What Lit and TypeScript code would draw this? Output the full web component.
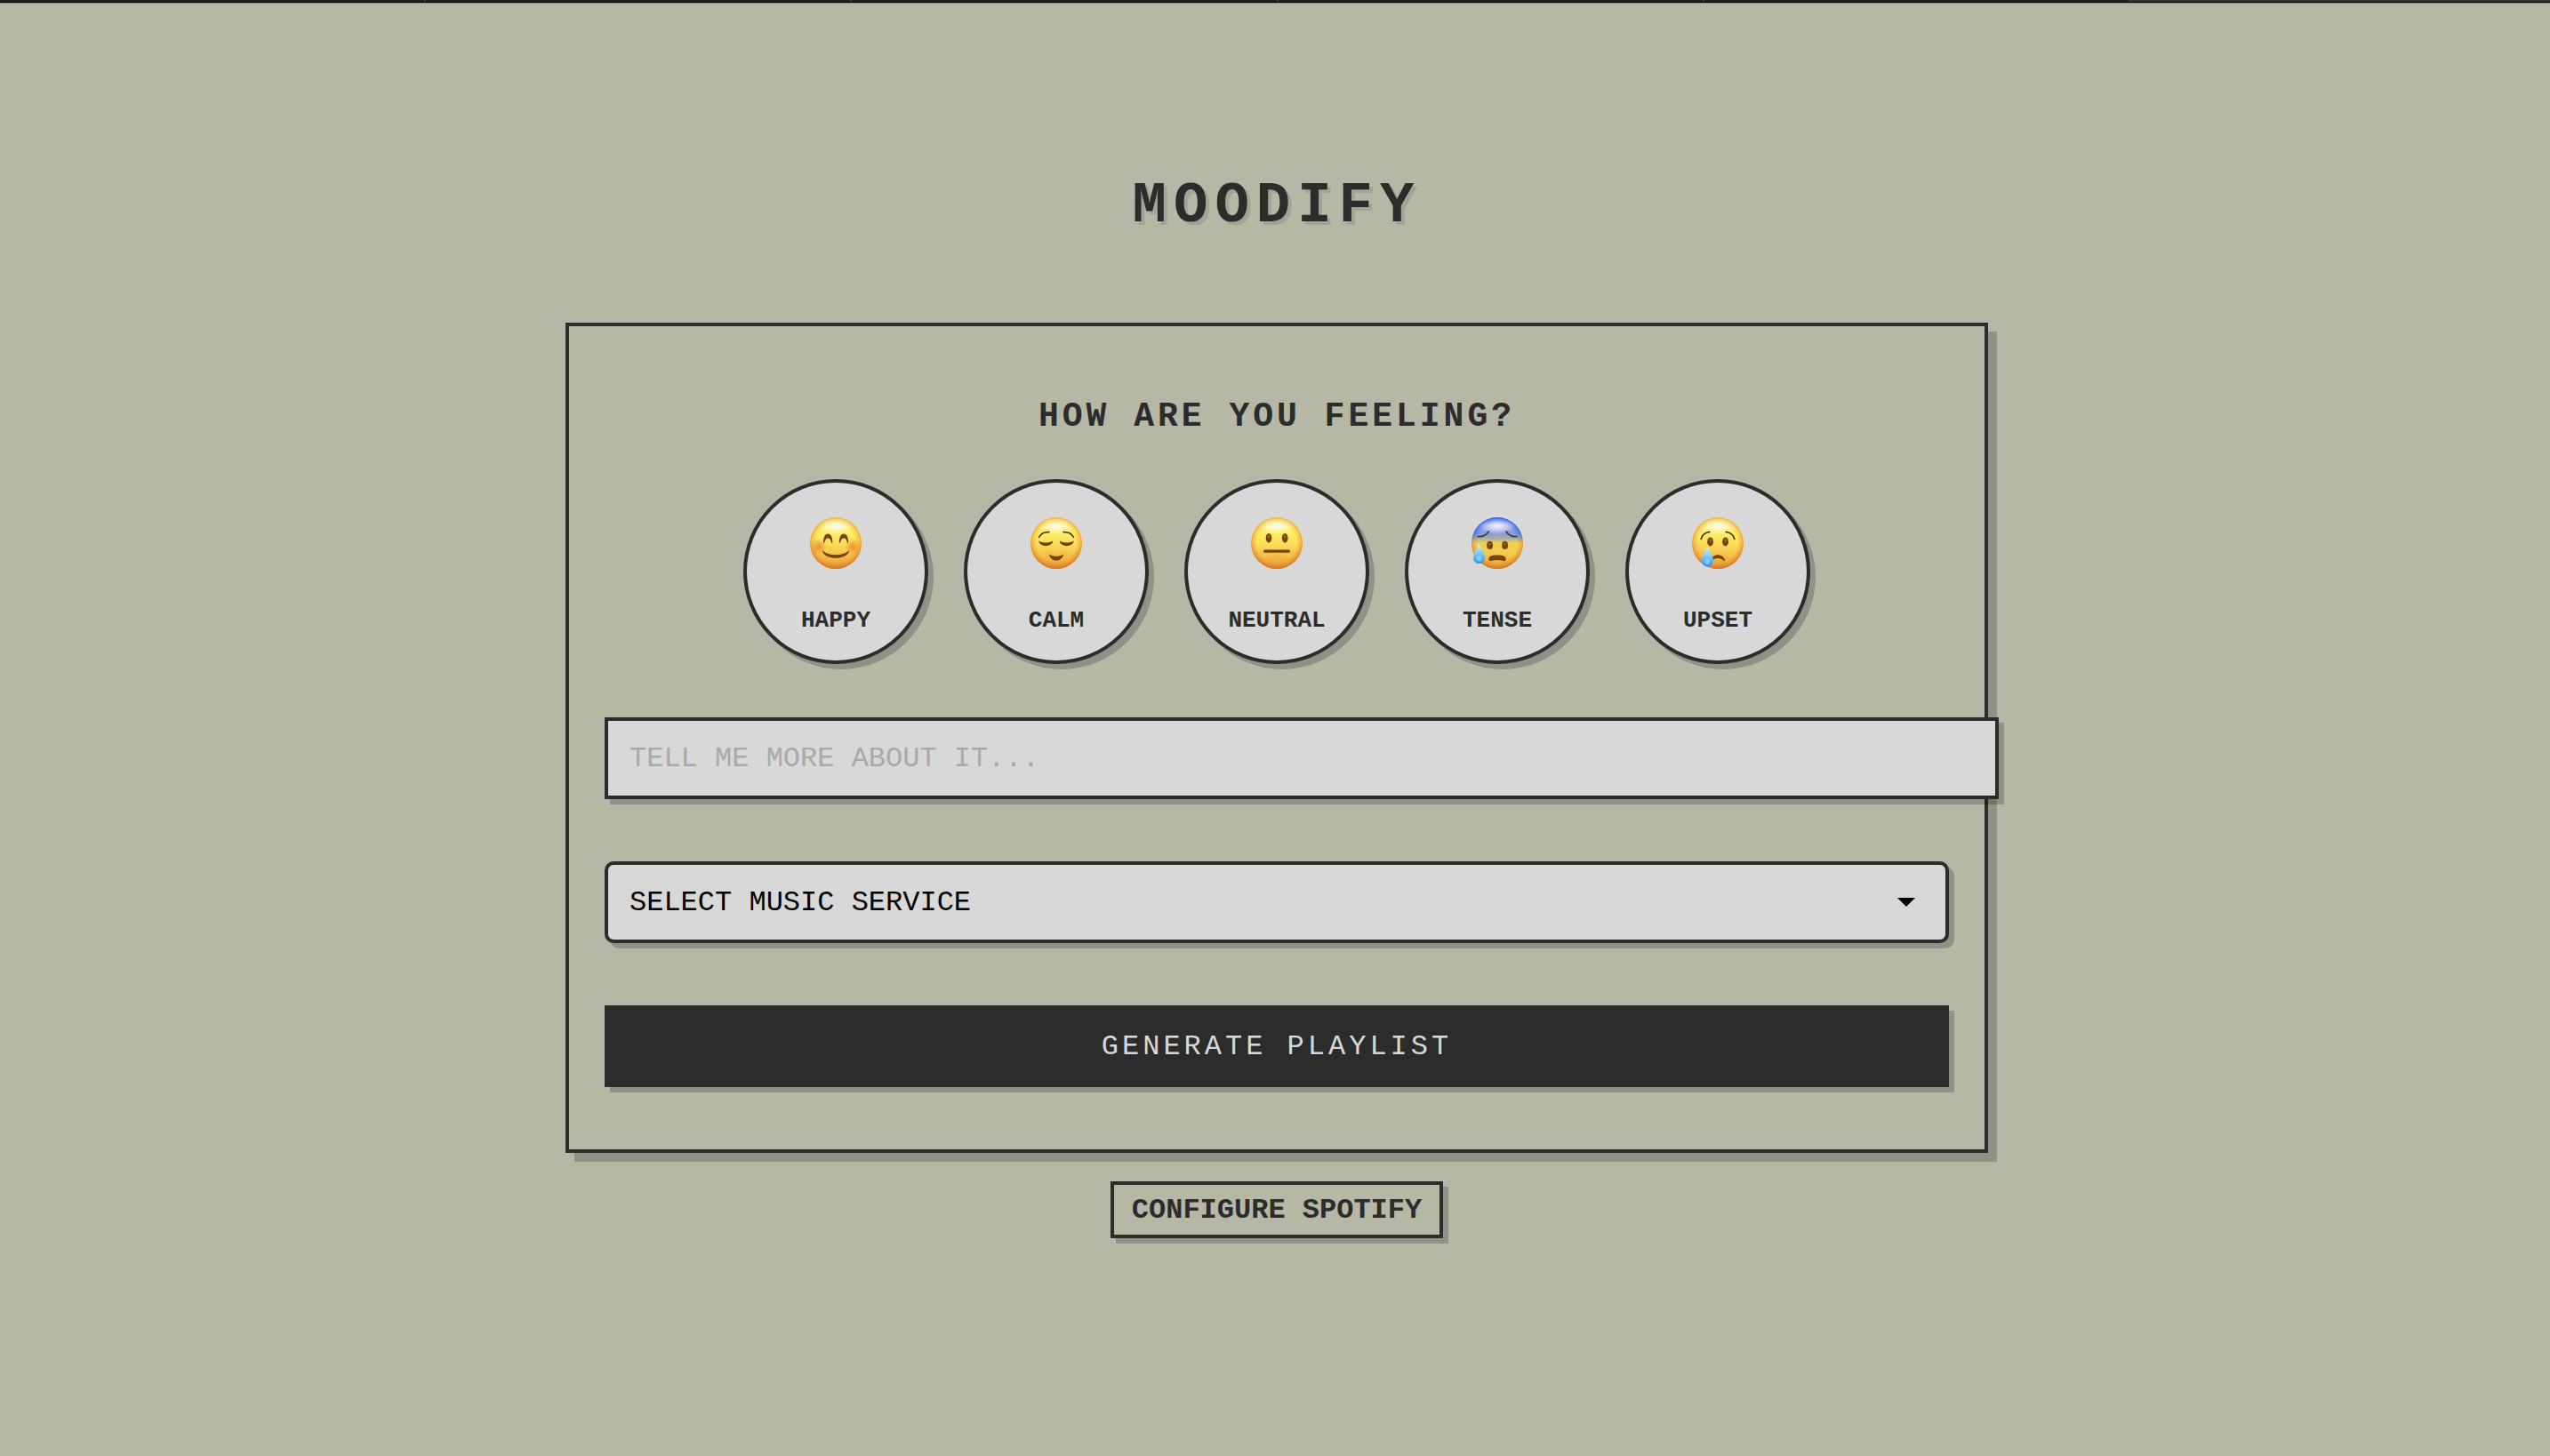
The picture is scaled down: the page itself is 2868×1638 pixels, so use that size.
import { LitElement, html, css, svg } from "lit";
import { customElement, property, state } from "lit/decorators.js";

type Mood = "happy" | "calm" | "neutral" | "tense" | "upset";

const MOODS: Mood[] = ["happy", "calm", "neutral", "tense", "upset"];
const TABS = [0, 1, 2, 3, 4, 5];

const BROWN = "#75430b";
const INK = "#5e3508";

const FEATURES = {
  happy: svg`
    <circle cx="10" cy="33" r="9" fill="url(#blush)" />
    <circle cx="48" cy="33" r="9" fill="url(#blush)" />
    <path d="M15 28.6C15 22 17 18.4 20.2 18.4S25.4 22 25.4 28.6C24.6 29.2 24 28.6 23.8 27.6C23 24.8 22 23.6 20.2 23.6S17.4 24.8 16.6 27.6C16.4 28.6 15.6 29.2 15 28.6Z" fill=${BROWN} />
    <path d="M32.8 28.6C32.8 22 34.8 18.4 38 18.4S43.2 22 43.2 28.6C42.4 29.2 41.8 28.6 41.6 27.6C40.8 24.8 39.8 23.6 38 23.6S35.2 24.8 34.4 27.6C34.2 28.6 33.4 29.2 32.8 28.6Z" fill=${BROWN} />
    <path d="M14.2 37.2C17.6 40.4 22.6 42.2 29 42.2S40.4 40.4 43.8 37.2C44.2 41.6 37.6 45.8 29 45.8S13.8 41.6 14.2 37.2Z" fill=${BROWN} />`,
  calm: svg`
    <path d="M9.6 22.4C11.6 18.6 16 16.2 21 16.6M48.4 22.4C46.4 18.6 42 16.2 37 16.6" fill="none" stroke=${INK} stroke-width="1.7" stroke-linecap="round" />
    <path d="M9.6 26.6C13 29.2 21.6 29.2 25 26.6C25.6 29.4 22 32.2 17.3 32.2S9 29.4 9.6 26.6Z" fill=${BROWN} />
    <path d="M33 26.6C36.4 29.2 45 29.2 48.4 26.6C49 29.4 45.4 32.2 40.7 32.2S32.4 29.4 33 26.6Z" fill=${BROWN} />
    <path d="M21 41.4C24.6 44.6 33.4 44.6 37 41.4C37 44.8 33.4 48.6 29 48.6S21 44.8 21 41.4Z" fill=${BROWN} />`,
  neutral: svg`
    <ellipse cx="20" cy="23.2" rx="3.3" ry="5.2" fill=${BROWN} />
    <ellipse cx="38.2" cy="23.2" rx="3.3" ry="5.2" fill=${BROWN} />
    <ellipse cx="20" cy="21.6" rx="1.3" ry="1.8" fill="#9a6a26" />
    <ellipse cx="38.2" cy="21.6" rx="1.3" ry="1.8" fill="#9a6a26" />
    <rect x="14" y="36.4" width="30" height="3.4" rx="1.5" fill=${BROWN} />`,
  tense: svg`
    <path d="M7.2 21.6C12 22 16.8 19.6 19.2 16M51 21.6C46.2 22 41.4 19.6 39 16" fill="none" stroke="#26435e" stroke-width="1.9" stroke-linecap="round" />
    <ellipse cx="20.6" cy="31.4" rx="3.4" ry="4.6" fill=${BROWN} />
    <ellipse cx="37.6" cy="31.4" rx="3.4" ry="4.6" fill=${BROWN} />
    <ellipse cx="20.6" cy="30" rx="1.3" ry="1.6" fill="#9a6a26" />
    <ellipse cx="37.6" cy="30" rx="1.3" ry="1.6" fill="#9a6a26" />
    <path d="M19.4 47C19.4 44 22.6 42.6 29 42.6S38.6 44 38.6 47C38.6 49.6 37 49.4 35 48.8C31.4 47.8 26.6 47.8 23 48.8C21 49.4 19.4 49.6 19.4 47Z" fill=${BROWN} />
    <path d="M8.6 30C10.6 34.6 15.2 40.4 15.2 45.4C15.2 49.4 12.4 52 8.6 52S2 49.4 2 45.4C2 40.4 6.6 34.6 8.6 30Z" fill="url(#tear)" />
    <ellipse cx="8.6" cy="46.4" rx="2.8" ry="3" fill="#9be4fb" opacity="0.6" />`,
  upset: svg`
    <path d="M10.2 24.4C11.4 20.2 15 17 19.8 16.4M47.8 24.4C46.6 20.2 43 17 38.2 16.4" fill="none" stroke=${INK} stroke-width="1.8" stroke-linecap="round" />
    <ellipse cx="20.6" cy="27.4" rx="3.4" ry="5" fill=${BROWN} />
    <ellipse cx="37.6" cy="27.4" rx="3.4" ry="5" fill=${BROWN} />
    <ellipse cx="20.6" cy="25.8" rx="1.3" ry="1.8" fill="#9a6a26" />
    <ellipse cx="37.6" cy="25.8" rx="1.3" ry="1.8" fill="#9a6a26" />
    <path d="M21.4 48.6C22 44.6 25 42.2 29 42.2S36 44.4 37.2 48.2C37.2 49.6 36.2 49.4 35.4 48.6C33.4 46.8 31.6 46 29 46S24.4 47 22.6 49Z" fill=${BROWN} />
    <path d="M17.4 33C19.4 37.6 24 43.4 24 48.6C24 52.8 21.2 55.4 17.4 55.4S10.8 52.8 10.8 48.6C10.8 43.4 15.4 37.6 17.4 33Z" fill="url(#tear)" />
    <ellipse cx="17.4" cy="49.6" rx="2.8" ry="3.2" fill="#9be4fb" opacity="0.6" />`,
};

@customElement("mood-face")
export class MoodFace extends LitElement {
  @property() mood: Mood = "happy";

  static styles = css`
    :host {
      display: block;
    }
    .face {
      display: block;
      width: 58px;
      height: 58px;
    }
  `;

  render() {
    const tense = this.mood === "tense";
    return html`
      <svg class="face" viewBox="0 0 58 58" aria-hidden="true">
        <defs>
          <linearGradient id="skin" x1="0" y1="0" x2="0" y2="1">
            <stop offset="0" stop-color="#fdf08a" />
            <stop offset="0.3" stop-color="#fdf068" />
            <stop offset="0.55" stop-color="#f9d956" />
            <stop offset="0.8" stop-color="#f4b545" />
            <stop offset="1" stop-color="#e9983a" />
          </linearGradient>
          <linearGradient id="cold" x1="0" y1="0" x2="0" y2="1">
            <stop offset="0" stop-color="#7d8ff0" />
            <stop offset="0.15" stop-color="#a9aeea" />
            <stop offset="0.3" stop-color="#8d9bd6" />
            <stop offset="0.4" stop-color="#a3a9a8" />
            <stop offset="0.5" stop-color="#f0d257" />
            <stop offset="0.7" stop-color="#f8c84c" />
            <stop offset="1" stop-color="#ea9a3a" />
          </linearGradient>
          <linearGradient id="edge" x1="0" y1="0" x2="0" y2="1">
            <stop offset="0" stop-color=${tense ? "#1b5cff" : "#f2ab2e"} />
            <stop offset="0.3" stop-color=${tense ? "#2b6df0" : "#f2a332"} />
            <stop offset="0.5" stop-color="#e89a35" />
            <stop offset="1" stop-color="#cf6f24" />
          </linearGradient>
          <radialGradient id="ring" cx="0.5" cy="0.5" r="0.5">
            <stop offset="0.76" stop-color="#fff" stop-opacity="0" />
            <stop offset="0.92" stop-color="#fff" stop-opacity="0.5" />
            <stop offset="1" stop-color="#fff" stop-opacity="1" />
          </radialGradient>
          <mask id="rim"><rect width="58" height="58" fill="url(#ring)" /></mask>
          <radialGradient id="shine">
            <stop offset="0" stop-color="#fff" stop-opacity="0.85" />
            <stop offset="1" stop-color="#fff" stop-opacity="0" />
          </radialGradient>
          <radialGradient id="blush">
            <stop offset="0" stop-color="#ef7b2c" stop-opacity="0.8" />
            <stop offset="1" stop-color="#ef7b2c" stop-opacity="0" />
          </radialGradient>
          <linearGradient id="tear" x1="0" y1="0" x2="0" y2="1">
            <stop offset="0" stop-color="#d4f4fd" />
            <stop offset="0.45" stop-color="#7fcdf8" />
            <stop offset="1" stop-color="#3190ee" />
          </linearGradient>
        </defs>
        <circle cx="29" cy="29" r="29" fill=${tense ? "url(#cold)" : "url(#skin)"} />
        <circle cx="29" cy="29" r="29" fill="url(#edge)" mask="url(#rim)" />
        <ellipse cx="29" cy="10" rx="20" ry="9" fill="url(#shine)" />
        ${FEATURES[this.mood]}
      </svg>
    `;
  }
}

@customElement("app-root")
export class AppRoot extends LitElement {
  @state() private mood: Mood | null = null;

  static styles = css`
    :host {
      --paper: #b6b7a5;
      --ink: #2c2c2c;
      --plate: #d8d8d8;
      --shade: rgba(0, 0, 0, 0.2);
      display: block;
      min-height: 100vh;
      background: var(--paper);
      color: var(--ink);
      font-family: "Courier New", "Liberation Mono", monospace;
      font-size: 32px;
    }
    .tabs {
      display: grid;
      grid-template-columns: repeat(5, 66fr) 65fr;
      height: 2px;
      background: #1f1f1d;
      border-bottom: 1px solid #000;
      box-shadow: 0 1px 0 #8a8b7c;
    }
    .tab {
      border-right: 2px solid #3c3c3c;
    }
    .tab:last-child {
      background: #333331;
      border-right: 0;
    }
    .page {
      display: flex;
      flex-direction: column;
      align-items: center;
      padding: 193px 20px 40px 24px;
    }
    .title {
      margin: 0 0 95px;
      font-size: 64px;
      line-height: 72px;
      letter-spacing: 8px;
      text-shadow: 4px 4px 0 rgba(0, 0, 0, 0.1);
    }
    .panel {
      box-sizing: border-box;
      width: 100%;
      max-width: 1600px;
      padding: 80px 40px 70px;
      border: 4px solid var(--ink);
      box-shadow: 10px 10px 0 var(--shade);
      display: flex;
      flex-direction: column;
      gap: 70px;
    }
    .question {
      margin: 0 0 48px;
      font-size: 38px;
      line-height: 44px;
      letter-spacing: 4px;
      text-align: center;
    }
    .feelings {
      margin-bottom: -10px;
    }
    .moods {
      display: flex;
      flex-wrap: wrap;
      justify-content: center;
      gap: 40px;
    }
    .mood {
      box-sizing: border-box;
      width: 208px;
      height: 208px;
      padding: 39px 0 0;
      display: flex;
      flex-direction: column;
      align-items: center;
      gap: 43px;
      border: 4px solid var(--ink);
      border-radius: 50%;
      background: var(--plate);
      color: var(--ink);
      box-shadow: 6px 6px 0 var(--shade);
      font: bold 26px/30px "Courier New", "Liberation Mono", monospace;
      cursor: pointer;
    }
    .mood[aria-pressed="true"] {
      background: var(--paper);
    }
    .field {
      height: 84px;
      margin: 0;
      border: 4px solid var(--ink);
      background: var(--plate);
      box-shadow: 6px 6px 0 var(--shade);
      border-radius: 0;
      padding: 0 24px;
      font: inherit;
      color: #000;
    }
    /* Content-box on purpose: the note field runs past the panel's edge. */
    .note {
      box-sizing: content-box;
      width: 100%;
    }
    .note::placeholder {
      color: #a9a9a9;
      opacity: 1;
    }
    .service {
      display: grid;
      align-items: center;
    }
    .select {
      grid-area: 1 / 1;
      box-sizing: border-box;
      width: 100%;
      height: 92px;
      border-radius: 10px;
      appearance: none;
    }
    .arrow {
      grid-area: 1 / 1;
      justify-self: end;
      width: 20px;
      height: 10px;
      margin-right: 38px;
      pointer-events: none;
    }
    .generate {
      height: 92px;
      padding: 0;
      border: 0;
      background: var(--ink);
      color: var(--plate);
      box-shadow: 6px 6px 0 var(--shade);
      font: inherit;
      letter-spacing: 4px;
      cursor: pointer;
    }
    .configure {
      box-sizing: border-box;
      height: 64px;
      margin-top: 32px;
      padding: 0 20px;
      border: 4px solid var(--ink);
      background: transparent;
      color: var(--ink);
      box-shadow: 6px 6px 0 var(--shade);
      font: inherit;
      font-weight: bold;
      cursor: pointer;
    }
  `;

  private pick(mood: Mood) {
    this.mood = this.mood === mood ? null : mood;
  }

  render() {
    return html`
      <div class="tabs">${TABS.map(() => html`<span class="tab"></span>`)}</div>
      <main class="page">
        <h1 class="title">MOODIFY</h1>
        <form class="panel" @submit=${(e: Event) => e.preventDefault()}>
          <section class="feelings">
            <h2 class="question">HOW ARE YOU FEELING?</h2>
            <div class="moods">
              ${MOODS.map(
                (mood) => html`
                  <button
                    class="mood"
                    type="button"
                    aria-pressed=${this.mood === mood ? "true" : "false"}
                    @click=${() => this.pick(mood)}
                  >
                    <mood-face .mood=${mood}></mood-face>
                    <span>${mood.toUpperCase()}</span>
                  </button>
                `
              )}
            </div>
          </section>
          <input
            class="field note"
            type="text"
            aria-label="Tell me more about it"
            placeholder="TELL ME MORE ABOUT IT..."
          />
          <div class="service">
            <select class="field select" aria-label="Select music service">
              <option>SELECT MUSIC SERVICE</option>
            </select>
            <svg class="arrow" viewBox="0 0 20 10" aria-hidden="true">
              <path d="M0 0H20L10 10Z" fill="#000" />
            </svg>
          </div>
          <button class="generate" type="submit">GENERATE PLAYLIST</button>
        </form>
        <button class="configure" type="button">CONFIGURE SPOTIFY</button>
      </main>
    `;
  }
}
